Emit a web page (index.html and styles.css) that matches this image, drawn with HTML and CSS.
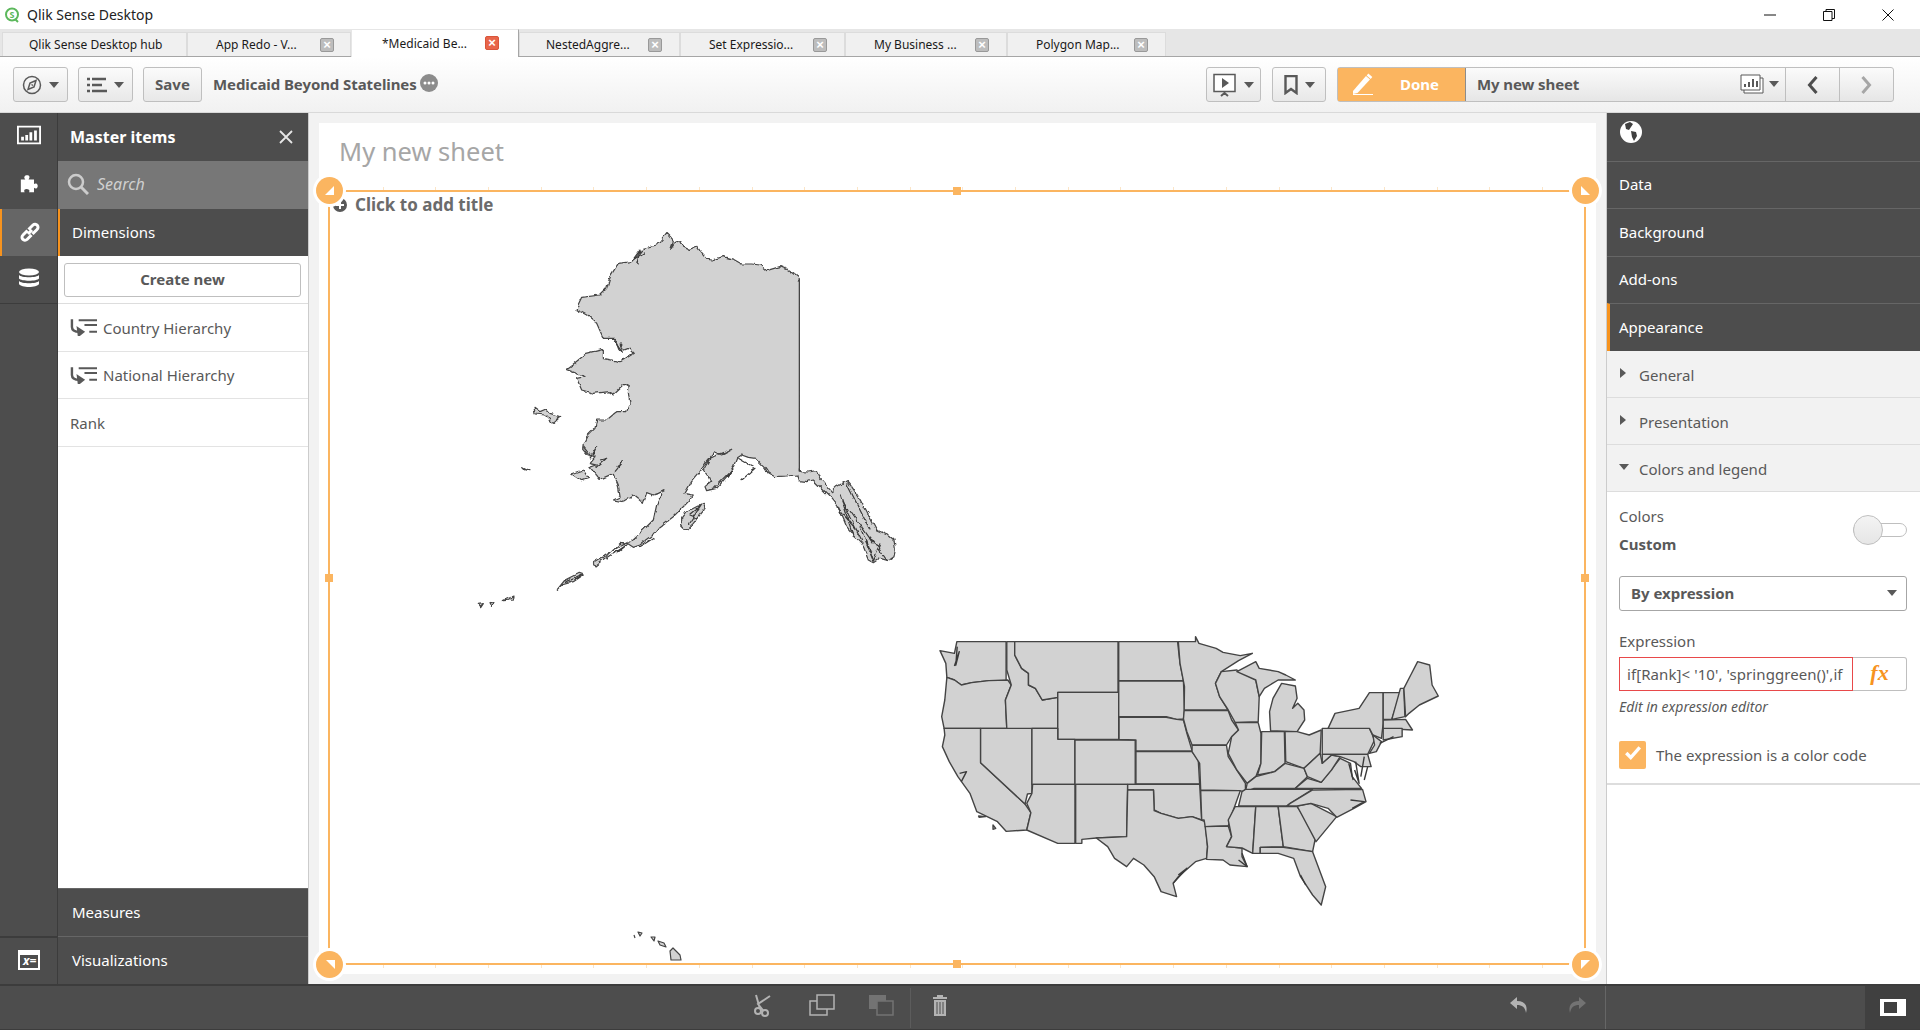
FILE: index.html
```html
<!DOCTYPE html>
<html lang="en">
<head>
<meta charset="utf-8">
<title>Qlik Sense Desktop</title>
<link rel="stylesheet" href="styles.css">
</head>
<body>
<div class="app">
  <header class="titlebar">
    <svg class="logo" viewBox="0 0 16 16"><circle cx="8" cy="7.500" r="6" fill="#fff" stroke="#5cb85c" stroke-width="2"/><path d="M11 12l3 3" stroke="#5cb85c" stroke-width="2"/><text x="8" y="10.500" text-anchor="middle" class="logo-s">S</text></svg>
    <span class="app-name">Qlik Sense Desktop</span>
    <div class="winctl">
      <svg viewBox="0 0 12 12"><path d="M0 6h12" stroke="#111" fill="none"/></svg>
      <svg viewBox="0 0 12 12"><path d="M.5 2.500h8.500v9h-8.500zM3 2.500V.5h8.500v9H9" stroke="#111" fill="none"/></svg>
      <svg viewBox="0 0 12 12"><path d="M.5.5l11 11M11.500.5l-11 11" stroke="#111" fill="none"/></svg>
    </div>
  </header>

  <nav class="tabs">
    <div class="tab w1"><span>Qlik Sense Desktop hub</span></div>
    <div class="tab w2"><span>App Redo - V...</span><i class="tabx">×</i></div>
    <div class="tab w3 active"><span>*Medicaid Be...</span><i class="tabx">×</i></div>
    <div class="tab w4"><span>NestedAggre...</span><i class="tabx">×</i></div>
    <div class="tab w5"><span>Set Expressio...</span><i class="tabx">×</i></div>
    <div class="tab w6"><span>My Business ...</span><i class="tabx">×</i></div>
    <div class="tab w7"><span>Polygon Map...</span><i class="tabx">×</i></div>
  </nav>

  <section class="toolbar">
    <button class="btn b55"><svg class="ico20" viewBox="0 0 20 20"><circle cx="10" cy="10" r="8.500" fill="none" stroke="#595959" stroke-width="1.500"/><path d="M14 5.500l-6 2.500-2 6.500 6-2.500zM9.500 9.500l1.500 1" fill="none" stroke="#595959" stroke-width="1.500"/></svg><b class="caret"></b></button>
    <button class="btn b55"><svg class="ico20" viewBox="0 0 20 16"><path d="M0 2h3M5 2h14M0 8h3M5 8h10M0 14h3M5 14h15" stroke="#595959" stroke-width="2.500" fill="none"/></svg><b class="caret"></b></button>
    <button class="btn save">Save</button>
    <span class="appname">Medicaid Beyond Statelines</span>
    <svg class="more" viewBox="0 0 18 18"><circle cx="9" cy="9" r="9" fill="#8c8c8c"/><circle cx="5" cy="9" r="1.500" fill="#fff"/><circle cx="9" cy="9" r="1.500" fill="#fff"/><circle cx="13" cy="9" r="1.500" fill="#fff"/></svg>

    <div class="tool-right">
      <button class="btn b55r"><svg class="ico24" viewBox="0 0 24 24"><path d="M1 1.500h21v17H1z" fill="#fff" stroke="#595959" stroke-width="1.500"/><path d="M9 5l7 5-7 5z" fill="#595959"/><path d="M11.500 18v3M8 23l3.500-3 3.500 3" stroke="#595959" stroke-width="2" fill="none"/></svg><b class="caret"></b></button>
      <button class="btn b54"><svg class="ico18" viewBox="0 0 14 20"><path d="M1.500 1h11v17l-5.500-4-5.500 4z" fill="none" stroke="#595959" stroke-width="2.400"/></svg><b class="caret"></b></button>
      <div class="sheetnav">
        <button class="done"><svg class="pencil" viewBox="0 0 22 22"><path d="M1 18L14 3l4 3.500L5.500 20 1 21z" fill="#fff"/><path d="M15.500 1.500l4 3.500" stroke="#fff" stroke-width="2.500"/><path d="M1 21.500h20" stroke="#fff"/></svg><span>Done</span></button>
        <div class="sheetname"><span>My new sheet</span><svg class="sheetico" viewBox="0 0 24 20"><path d="M4 4h19v15H4z" fill="#fff" stroke="#595959"/><path d="M1 1h19v15H1z" fill="#fff" stroke="#595959"/><path d="M5 13v-3M9 13V8M13 13V5M17 13V7" stroke="#595959" stroke-width="2"/></svg><b class="caret"></b></div>
        <button class="navbtn"><svg viewBox="0 0 12 20"><path d="M10 2L3 10l7 8" fill="none" stroke="#4d4d4d" stroke-width="3"/></svg></button>
        <button class="navbtn"><svg viewBox="0 0 12 20"><path d="M2 2l7 8-7 8" fill="none" stroke="#a6a6a6" stroke-width="3"/></svg></button>
      </div>
    </div>
  </section>

  <main class="main">
    <aside class="leftnav">
      <div class="navitem"><svg viewBox="0 0 26 20"><path d="M1 1h24v18H1z" fill="none" stroke="#fff" stroke-width="2"/><path d="M6 16v-4M10.500 16v-6M15 16V7M20 16V5" stroke="#fff" stroke-width="3"/></svg></div>
      <div class="navitem puzzle"><svg viewBox="0 0 22 22"><path d="M2 6h5c-1-1-1.500-2-1-3 .8-2 5-2 5.500 0 .2 1-.3 2-1 3h6v5c1-.6 2-.8 3-.3 1.500 1 1.500 4 0 5-1 .5-2 .2-3-.5v5H11c.5-1 .8-2 0-3-1.500-1-4-1-5 0-.5 1-.3 2 .3 3H2z" fill="#fff"/></svg></div>
      <div class="navitem on"><svg viewBox="0 0 20 20"><path d="M8 12l4-4M7.500 8.500l-4.500 4.500a3 3 0 0 0 4 4.500l4.500-4.500M8.500 7.500l4.500-4.500a3 3 0 0 1 4 4.500l-4.500 4.500" fill="none" stroke="#fff" stroke-width="3"/></svg></div>
      <div class="navitem last"><svg viewBox="0 0 22 20"><ellipse cx="11" cy="4" rx="10" ry="3.500" fill="#fff"/><path d="M1 7c2 3 18 3 20 0v3.500c-2 3-18 3-20 0zM1 13c2 3 18 3 20 0v3c-2 4-18 4-20 0z" fill="#fff"/></svg></div>
      <div class="navitem bottom"><svg viewBox="0 0 22 20"><path d="M0 0h22v20H0z" fill="#fff"/><path d="M2 5h18v13H2z" fill="#4d4d4d"/><text x="5" y="15" class="vis-x">x=</text></svg></div>
    </aside>

    <section class="leftpanel">
      <div class="lp-head"><span>Master items</span><svg viewBox="0 0 14 14"><path d="M1 1l12 12M13 1L1 13" stroke="#e6e6e6" stroke-width="1.800"/></svg></div>
      <div class="lp-search"><svg viewBox="0 0 22 22"><circle cx="9" cy="9" r="7" fill="none" stroke="#ccc" stroke-width="2.500"/><path d="M14 14l7 7" stroke="#ccc" stroke-width="3"/></svg><span>Search</span></div>
      <div class="lp-dim">Dimensions</div>
      <div class="lp-body">
        <div class="lp-create"><button class="createbtn">Create new</button></div>
        <div class="lp-row"><svg class="hier" viewBox="0 0 28 18"><path d="M2 1v8c0 3 3 5 8 5" fill="none" stroke="#595959" stroke-width="2.500"/><path d="M8 10l6 4-5 4zM9 2h19M15 7h13M20 14h8" fill="#595959" stroke="#595959" stroke-width="2"/></svg><span>Country Hierarchy</span></div>
        <div class="lp-row"><svg class="hier" viewBox="0 0 28 18"><path d="M2 1v8c0 3 3 5 8 5" fill="none" stroke="#595959" stroke-width="2.500"/><path d="M8 10l6 4-5 4zM9 2h19M15 7h13M20 14h8" fill="#595959" stroke="#595959" stroke-width="2"/></svg><span>National Hierarchy</span></div>
        <div class="lp-row plain"><span>Rank</span></div>
      </div>
      <div class="lp-foot">Measures</div>
      <div class="lp-foot">Visualizations</div>
    </section>

    <section class="canvas">
      <div class="sheet">
        <h1 class="sheet-title">My new sheet</h1>
        <div class="chart">
          <i class="ticks t-top"></i><i class="ticks t-bot"></i>
          <svg class="map" viewBox="328 190 1258 775" preserveAspectRatio="none">
            <defs>
              <filter id="rough" x="-5%" y="-5%" width="110%" height="110%"><feTurbulence type="fractalNoise" baseFrequency="0.05" numOctaves="2" seed="4" result="n"/><feDisplacementMap in="SourceGraphic" in2="n" scale="14" xChannelSelector="R" yChannelSelector="G"/></filter>
            </defs>
            <svg x="440" y="210" width="480" height="420" viewBox="0 0 1440 1260" preserveAspectRatio="none" class="geo">
              <g filter="url(#rough)">
              <path d="M678 70L688 80 700 95 692 118 705 98 718 92 728 110 745 118 770 108 785 130 800 148 815 150 850 140 880 148 905 162 935 162 960 165 980 182 1020 170 1045 180 1078 205 1078 785 1105 786 1130 782 1140 805 1175 845 1190 830 1220 812 1235 830 1265 875 1310 960 1345 975 1362 990 1366 1020 1362 1040 1345 1052 1320 1045 1300 1058 1285 1050 1265 1000 1250 985 1220 950 1195 890 1175 865 1150 840 1120 810 1100 815 1075 812 1070 795 1040 798 1005 800 985 790 975 775 945 745 925 742 905 735 890 745 880 770 860 800 830 835 800 842 795 830 812 815 805 800 790 780 810 745 825 738 875 718 845 735 825 725 800 755 780 785 755 815 735 850 760 855 745 875 735 885 700 920 660 950 640 975 620 990 600 1005 580 1012 565 1002 540 1000 515 1025 500 1040 465 1068 460 1058 490 1040 530 1015 570 995 610 960 640 930 650 885 672 842 655 850 640 855 620 848 610 880 580 855 548 875 520 870 540 860 535 825 520 790 480 808 450 772 470 765 448 760 465 740 445 735 428 715 430 700 440 680 465 655 470 630 500 630 530 605 560 605 570 580 565 545 568 530 555 522 520 555 505 545 460 550 425 540 410 505 435 500 378 478 400 462 440 430 490 418 490 445 540 455 580 430 565 415 540 425 525 385 490 385 470 340 440 315 408 298 425 262 480 255 500 235 510 200 535 160 575 155 610 115 650 105z"/>
              <path d="M282 592L285 612 315 615 340 640 362 620 330 610 318 597 300 605zM395 792L430 780 445 805 425 812zM725 925L740 905 790 880 795 895 760 940 740 960 725 945zM248 770L270 782 258 780zM352 1138L375 1110 415 1090 430 1095 400 1115 365 1125zM190 1172L222 1158 220 1170zM115 1180L130 1178 122 1190zM147 1178L162 1176 155 1192z"/>
              <path class="marks" d="M590 165L600 120 578 150 612 128M520 385L550 430 540 400M820 835L885 770 860 800M905 810L945 775 930 780M895 745L940 770M1200 850L1240 980 1215 900M1220 820L1290 960 1260 900M1190 890L1250 960M1260 950L1300 1050 1280 990M1290 980L1340 1050 1305 1000M1320 1000L1300 1055M1230 900L1300 1000M1205 870L1265 990M745 945L785 885 750 915 775 925M500 1045L560 1005 530 1030M600 1010L640 985M375 1118L425 1095 405 1110M450 745L470 710 460 735M470 770L500 745 480 750M525 785L550 755 530 770M430 710L450 735"/>
              </g>
              <rect class="patch-g" x="1050" y="215" width="28" height="560"/>
              <rect class="patch-w" x="1078" y="200" width="22" height="575"/>
              <path class="marks" d="M1078 205V785"/>
            </svg>
            <svg x="920" y="620" width="540" height="300" viewBox="0 0 1568 900" preserveAspectRatio="none" class="geo us">
              <path d="M107 65L250 65 250 181 200 182 150 188 120 195 100 180 78 172 75 130 58 92 100 100z"/>
              <path d="M78 172L100 180 120 195 150 188 200 182 255 180 265 195 248 240 252 325 70 325 63 290 72 240z"/>
              <path d="M70 325L176 325 176 428 305 552 322 578 310 630 250 634 225 605 165 575 145 520 110 470 85 425 65 380 72 345z"/>
              <path d="M176 325L325 325 325 520 312 522 305 552 176 428z"/>
              <path d="M252 65L275 65 275 105 295 145 315 160 315 195 335 205 355 240 400 232 400 325 252 325 248 240 265 195 252 150z"/>
              <path d="M275 65L575 65 575 217 400 217 400 232 355 240 335 205 315 195 315 160 295 145 275 105z"/>
              <path d="M400 217L577 217 577 358 400 358z"/>
              <path d="M325 325L400 325 400 358 450 358 450 493 325 493z"/>
              <path d="M327 493L450 493 450 670 400 670 310 630 322 578 310 550 325 520z"/>
              <path d="M450 360L625 360 625 493 450 493z"/>
              <path d="M452 493L603 493 600 650 512 654 470 658 470 670 452 670z"/>
              <path d="M577 65L748 65 755 130 765 182 577 182z"/>
              <path d="M577 183L765 183 768 270 765 297 745 298 715 290 577 290z"/>
              <path d="M578 292L715 292 745 298 765 300 775 340 790 392 627 393 627 360 578 358z"/>
              <path d="M627 395L790 395 808 420 812 492 627 492z"/>
              <path d="M603 493L812 493 818 600 790 590 750 595 700 580 680 570 678 510 603 510z"/>
              <path d="M603 510L678 510 680 572 700 580 750 595 790 590 828 605 835 680 832 715 800 725 750 770 735 790 745 830 700 815 680 770 650 735 620 715 600 740 565 715 545 680 512 654 600 650z"/>
              <path d="M750 65L800 65 800 50 810 70 860 85 880 97 930 107 965 100 925 122 875 155 858 190 870 230 895 270 767 270 768 200 755 130z"/>
              <path d="M767 272L895 272 905 300 925 330 905 350 890 375 790 375 775 335 765 297z"/>
              <path d="M790 376L890 376 895 410 920 450 945 490 945 515 925 512 815 510 812 430 790 395z"/>
              <path d="M815 512L930 512 910 570 895 618 828 620 825 600 818 600z"/>
              <path d="M828 620L895 618 905 650 890 680 935 684 935 710 950 740 900 735 880 720 832 718 835 680z"/>
              <path d="M875 155L920 150 975 180 985 230 982 305 915 307 895 270 870 230 858 190z"/>
              <path d="M915 308L982 308 990 340 990 430 975 470 950 490 920 450 895 400 905 350 925 330z"/>
              <path d="M1018 332L1015 275 1025 235 1050 190 1090 198 1095 235 1082 265 1097 250 1115 270 1117 300 1095 335z"/>
              <path d="M920 155L975 125 985 145 1040 155 1062 165 1090 180 1040 180 1000 205 985 230 975 180z"/>
              <path d="M992 335L1058 335 1060 430 1030 455 980 465 990 430z"/>
              <path d="M1060 335L1095 335 1130 345 1165 330 1162 400 1115 445 1062 425z"/>
              <path d="M975 470L1030 455 1060 430 1115 445 1125 470 1090 505 970 505 945 515 950 490z"/>
              <path d="M945 508L1140 508 1075 550 1065 558 925 558 935 515z"/>
              <path d="M915 560L975 560 966 700 935 684 890 680 905 650 895 600z"/>
              <path d="M975 560L1040 560 1055 680 988 682 988 700 966 700z"/>
              <path d="M1040 560L1095 560 1150 645 1140 695 1055 680z"/>
              <path d="M988 682L1055 682 1140 695 1178 800 1165 855 1140 825 1105 770 1085 715 1040 700 988 700z"/>
              <path d="M1095 558L1135 550 1210 590 1150 665z"/>
              <path d="M1065 558L1075 550 1140 510 1285 508 1295 545 1260 565 1210 592 1185 565 1135 550 1095 558z"/>
              <path d="M1090 505L1125 475 1165 487 1220 415 1250 430 1255 470 1282 505z"/>
              <path d="M1115 445L1162 400 1168 430 1195 405 1220 410 1195 450 1165 487 1125 470z"/>
              <path d="M1168 325L1305 325 1320 360 1300 403 1168 403z"/>
              <path d="M1185 325L1205 280 1275 265 1305 218 1345 218 1345 310 1340 355 1315 345 1305 325z"/>
              <path d="M1315 345L1340 365 1325 395 1305 400 1320 375z"/>
              <path d="M1168 403L1300 403 1310 440 1280 440 1260 425 1220 410 1195 405 1168 430z"/>
              <path d="M1345 218L1395 218 1370 298 1345 298z"/>
              <path d="M1395 205L1405 205 1408 290 1370 298z"/>
              <path d="M1405 205L1425 165 1445 125 1480 135 1487 195 1505 228 1450 255 1420 280 1410 290z"/>
              <path d="M1345 300L1410 298 1430 330 1345 325z"/>
              <path d="M1345 325L1400 325 1400 350 1345 360z"/>
              <path d="M170 588L190 590 172 592zM212 615L220 625 212 628z"/>
              <path class="marks" d="M108 80L104 135 114 95 100 138M1265 425L1275 490 1262 450M1290 410L1280 470M735 790L775 745 750 765M1105 765L1120 795M935 700L950 740 925 720M115 460L135 455 120 485M1250 540L1290 545 1255 565M1335 370L1375 350M1245 430L1258 480M1300 440L1290 480"/>
            </svg>
            <g class="geo">
              <path d="M670 951L673 948 680 955 681 960 671 960z"/>
              <path d="M658 941L664 943 666 947 660 945zM651 937L655 937 654 941zM638 932L642 933 640 936zM634 935L635 938"/>
            </g>
          </svg>
          <div class="add-title"><svg viewBox="0 0 14 14"><circle cx="7" cy="7" r="7" fill="#595959"/><path d="M7 3v8M3 7h8" stroke="#fff" stroke-width="2"/></svg><span>Click to add title</span></div>
          <i class="knob k-tl"></i><i class="knob k-tr"></i><i class="knob k-bl"></i><i class="knob k-br"></i>
          <i class="grip g-t"></i><i class="grip g-b"></i><i class="grip g-l"></i><i class="grip g-r"></i>
        </div>
      </div>
    </section>

    <aside class="rightpanel">
      <div class="rp-row head"><svg viewBox="0 0 22 22"><circle cx="11" cy="11" r="11" fill="#fff"/><path d="M5 3l5-2 3 2-2 3-2 3-3-1zM11 10l5 1 1 4-3 5-2-4z" fill="#404040"/></svg></div>
      <div class="rp-row">Data</div>
      <div class="rp-row">Background</div>
      <div class="rp-row">Add-ons</div>
      <div class="rp-row sel">Appearance</div>
      <div class="acc"><b class="tri right"></b>General</div>
      <div class="acc"><b class="tri right"></b>Presentation</div>
      <div class="acc"><b class="tri down"></b>Colors and legend</div>
      <div class="props">
        <div class="colorline">
          <div><div class="lbl">Colors</div><div class="lblb">Custom</div></div>
          <div class="toggle"><i></i></div>
        </div>
        <div class="select"><span>By expression</span><b class="caret"></b></div>
        <div class="lbl exprlbl">Expression</div>
        <div class="expr"><div class="exprinput">if[Rank]&lt; '10', 'springgreen()',if</div><div class="fx">fx</div></div>
        <div class="editlink">Edit in expression editor</div>
        <div class="checkline"><span class="check"><svg viewBox="0 0 16 14"><path d="M2 7l4 4 8-9" fill="none" stroke="#fff" stroke-width="3"/></svg></span><span>The expression is a color code</span></div>
      </div>
    </aside>
  </main>

  <footer class="bottombar">
    <div class="bb-left"></div>
    <div class="bb-center">
      <div class="bb-tools">
        <svg class="w22" viewBox="0 0 20 24"><circle cx="5" cy="18" r="3" fill="none" stroke="#b3b3b3" stroke-width="2"/><circle cx="12" cy="20" r="3" fill="none" stroke="#b3b3b3" stroke-width="2"/><path d="M7 16L3 2M10.500 18L5 11 17 3" fill="none" stroke="#b3b3b3" stroke-width="2"/></svg>
        <svg class="w26" viewBox="0 0 26 22"><path d="M1 7h17v14H1z" fill="#4d4d4d" stroke="#b3b3b3" stroke-width="1.500"/><path d="M8 1h17v14H8z" fill="#4d4d4d" stroke="#b3b3b3" stroke-width="1.500"/></svg>
        <svg class="w26" viewBox="0 0 26 22"><path d="M1 1h17v14H1z" fill="#737373"/><path d="M9 7h16v14H9z" fill="#4d4d4d" stroke="#737373" stroke-width="1.500"/></svg>
        <span class="bb-sep"></span>
        <svg class="w18" viewBox="0 0 16 22"><path d="M1 3h14v2H1zM5 1h6v2H5z" fill="#b3b3b3"/><path d="M2 6h12v16H2z" fill="#b3b3b3"/><path d="M5 8v12M8 8v12M11 8v12" stroke="#4d4d4d"/></svg>
      </div>
      <div class="bb-undo">
        <svg class="w20" viewBox="0 0 20 20"><path d="M8 2L1 8l7 6v-4c5 0 8 2 9 8 2-7-1-12-9-12z" fill="#b3b3b3"/></svg>
        <svg class="w20" viewBox="0 0 20 20"><path d="M12 2l7 6-7 6v-4c-5 0-8 2-9 8-2-7 1-12 9-12z" fill="#737373"/></svg>
      </div>
    </div>
    <div class="bb-right"><div class="viewbtn"><i></i></div></div>
  </footer>
</div>
</body>
</html>
```
FILE: styles.css
```css
* { box-sizing: border-box; }
html, body { margin: 0; height: 100%; overflow: hidden; }
body { font-family: "Noto Sans", "Open Sans", sans-serif; color: #595959; background: #fff; }
button { font-family: inherit; }
i, b { font-style: normal; }
.app { display: flex; flex-direction: column; height: 1030px; width: 1920px; }

/* title bar */
.titlebar { height: 29px; display: flex; align-items: center; padding-left: 4px; background: #fff; flex: none; }
.logo { width: 16px; height: 16px; }
.logo-s { font: bold 9px "Noto Sans", sans-serif; fill: #5cb85c; }
.app-name { margin-left: 7px; font-size: 14px; color: #222; }
.winctl { margin-left: auto; display: flex; gap: 47px; padding-right: 26px; }
.winctl svg { width: 12px; height: 12px; }

/* tabs */
.tabs { height: 28px; flex: none; display: flex; align-items: flex-end; padding-left: 2px; background: #e6e6e6; border-bottom: 1px solid #a6a6a6; }
.tab { height: 24px; display: flex; align-items: center; padding: 0 17px 0 28px; background: #f0f0f0; border: 1px solid #dcdcdc; border-bottom: 0; font-size: 12px; color: #1a1a1a; }
.tab.active { height: 28px; background: #fff; margin-bottom: -1px; padding: 0 19px 1px 30px; border-color: #e6e6e6; border-right-color: #a6a6a6; }
.w1 { width: 185px; padding-left: 26px; } .w2 { width: 164px; padding-right: 16px; } .w3 { width: 168px; } .w4 { width: 161px; padding-left: 26px; } .w5 { width: 165px; } .w6 { width: 162px; } .w7 { width: 159px; }
.tabx { margin-left: auto; width: 14px; height: 14px; background: #bdbdbd; border: 1px solid #999; border-radius: 2px; color: #fff; font: bold 13px/11px "Liberation Sans", sans-serif; text-align: center; }
.active .tabx { background: #e8654a; border-color: #d9553a; }

/* toolbar */
.toolbar { height: 56px; flex: none; display: flex; align-items: center; padding: 0 26px 0 13px; background: linear-gradient(#fff, #f1f1f1); border-bottom: 1px solid #d9d9d9; }
.btn { height: 35px; display: flex; align-items: center; justify-content: center; gap: 7px; padding: 0; border: 1px solid #bfbfbf; border-radius: 3px; background: linear-gradient(#fbfbfb, #e8e8e8); color: #595959; }
.b55 { width: 55px; margin-right: 10px; }
.b55r { width: 55px; margin-right: 11px; }
.b54 { width: 54px; margin-right: 11px; }
.save { width: 59px; font-size: 15px; font-weight: 700; padding-bottom: 2px; }
.caret { width: 0; height: 0; border: 5px solid transparent; border-top: 6px solid #595959; border-bottom: 0; display: inline-block; flex: none; }
.ico20 { width: 20px; height: 20px; }
.ico24 { width: 24px; height: 24px; }
.ico18 { width: 14px; height: 20px; }
.appname { margin: -2px 0 0 11px; font-size: 15px; font-weight: 700; letter-spacing: -0.08px; }
.more { width: 18px; height: 18px; margin: -3px 0 0 3px; }
.tool-right { margin-left: auto; display: flex; align-items: center; }
.sheetnav { display: flex; height: 35px; border: 1px solid #bfbfbf; border-radius: 3px; background: linear-gradient(#fbfbfb, #e6e6e6); }
.done { width: 128px; border: 0; border-right: 1px solid #8c8c8c; background: #fbb560; display: flex; align-items: center; padding: 0 0 2px 14px; color: #fff; font-size: 15px; font-weight: 700; }
.pencil { width: 22px; height: 22px; }
.done span { margin-left: 26px; }
.sheetname { width: 319px; display: flex; align-items: center; padding: 0 6px 2px 11px; font-size: 15px; font-weight: 700; letter-spacing: -0.1px; }
.sheetico { width: 24px; height: 20px; margin-left: auto; margin-right: 5px; }
.navbtn { width: 54px; border: 0; border-left: 1px solid #bfbfbf; background: transparent; padding: 0; display: flex; align-items: center; justify-content: center; }
.navbtn svg { width: 13px; height: 20px; }

/* main */
.main { flex: 1; display: flex; min-height: 0; }
.leftnav { width: 58px; flex: none; display: flex; flex-direction: column; background: #4d4d4d; border-right: 1px solid #3c3c3c; }
.navitem { height: 48px; display: flex; align-items: center; justify-content: center; flex: none; padding-bottom: 4px; }
.navitem svg { width: 24px; height: 20px; }
.navitem.puzzle { padding-bottom: 2px; }
.navitem.on { background: #666; border-left: 2px solid #f7931e; height: 47px; padding-bottom: 2px; }
.navitem.last { border-bottom: 1px solid #3c3c3c; }
.navitem.bottom { margin-top: auto; border-top: 2px solid #3c3c3c; padding-bottom: 2px; }
.vis-x { font: italic bold 12px "Noto Sans", sans-serif; fill: #fff; }

.leftpanel { width: 251px; flex: none; display: flex; flex-direction: column; background: #fff; border-right: 1px solid #ccc; }
.lp-head { height: 48px; flex: none; background: #4d4d4d; display: flex; align-items: center; justify-content: space-between; padding: 0 15px 0 12px; color: #fff; font-size: 16px; font-weight: 700; }
.lp-head svg { width: 14px; height: 14px; }
.lp-search { height: 48px; flex: none; background: #777; display: flex; align-items: center; padding: 0 0 2px 9px; color: #d0d0d0; font-size: 16px; font-style: italic; }
.lp-search svg { width: 22px; height: 22px; }
.lp-search span { margin-left: 8px; }
.lp-dim { height: 47px; flex: none; background: #4d4d4d; color: #fff; border-left: 2px solid #f7931e; display: flex; align-items: center; padding: 0 0 2px 12px; font-size: 15px; }
.lp-body { flex: 1; }
.lp-create { height: 48px; padding: 7px 7px 6px 6px; border-bottom: 1px solid #ddd; }
.createbtn { width: 100%; height: 34px; background: #fff; border: 1px solid #bfbfbf; border-radius: 3px; color: #595959; font-size: 15px; font-weight: 700; padding-bottom: 4px; }
.lp-row { height: 47.500px; border-bottom: 1px solid #e3e3e3; display: flex; align-items: center; padding-left: 12px; font-size: 15px; }
.lp-row span { padding-top: 1px; }
.hier { width: 27px; height: 18px; margin-right: 6px; }
.lp-foot { height: 48px; flex: none; background: #4d4d4d; color: #fff; border-top: 1px solid #666; display: flex; align-items: center; padding: 0 0 2px 14px; font-size: 15px; }
.lp-foot:first-of-type { border-top: 2px solid #b3b3b3; }

/* canvas */
.canvas { flex: 1; background: #f2f2f2; padding: 10px; display: flex; min-width: 0; }
.sheet { flex: 1; background: #fff; display: flex; flex-direction: column; padding: 0 10px 9px 9px; }
.sheet-title { height: 67px; flex: none; margin: 0; padding: 10px 0 0 11px; font-size: 25.500px; font-weight: 400; color: #a6a6a6; line-height: 36px; }
.chart { flex: 1; position: relative; border: 2px solid #fbb560; }
.map { position: absolute; left: -2px; top: -2px; width: 1258px; height: 775px; overflow: visible; }
.geo path { fill: #d2d2d2; stroke: #444; stroke-width: 1.200px; stroke-linejoin: round; vector-effect: non-scaling-stroke; }
.geo.us path { stroke-width: 1.400px; }
.geo path.marks { fill: none; stroke: #3a3a3a; }
.patch-g { fill: #d2d2d2; }
.patch-w { fill: #fff; }
.add-title { position: absolute; left: 3px; top: 1px; display: flex; align-items: center; gap: 8px; color: #6b6b6b; font-size: 17px; font-weight: 700; }
.add-title svg { width: 14px; height: 14px; }
.ticks { position: absolute; left: 0; right: 0; height: 3px; background: repeating-linear-gradient(to right, #fbe5c8 0 1px, transparent 1px 52.700px); }
.t-top { top: -5px; }
.t-bot { bottom: -5px; }
.knob { position: absolute; width: 27px; height: 27px; border-radius: 50%; background: #fbb560; box-shadow: 0 0 0 3px #fff; }
.knob::after { content: ""; position: absolute; left: 9px; top: 9px; width: 0; height: 0; border-left: 9px solid transparent; border-bottom: 9px solid #fff; }
.k-tl { left: -14px; top: -15px; }
.k-tr { right: -15px; top: -15px; }
.k-tr::after { border-left: 0; border-right: 9px solid transparent; left: 9px; }
.k-bl { left: -14px; bottom: -15px; }
.k-bl::after { border-bottom: 0; border-top: 9px solid #fff; border-left: 0; border-right: 9px solid transparent; left: 10px; transform: scaleX(-1); }
.k-br { right: -15px; bottom: -15px; }
.k-br::after { border-bottom: 0; border-left: 0; border-top: 9px solid #fff; border-right: 9px solid transparent; left: 9px; }
.grip { position: absolute; width: 8px; height: 8px; background: #fbb560; }
.g-t { left: calc(50% - 4px); top: -5px; }
.g-b { left: calc(50% - 4px); bottom: -5px; }
.g-l { top: calc(50% - 4px); left: -5px; }
.g-r { top: calc(50% - 4px); right: -5px; }

/* right panel */
.rightpanel { width: 314px; flex: none; display: flex; flex-direction: column; background: #fff; border-left: 1px solid #ccc; }
.rp-row { height: 47.500px; flex: none; background: #4d4d4d; color: #fff; border-top: 1px solid #666; display: flex; align-items: center; padding: 0 0 1px 12px; font-size: 15px; }
.rp-row.head { border-top: 0; padding-left: 13px; padding-bottom: 10px; }
.rp-row.head svg { width: 22px; height: 22px; }
.rp-row.sel { border-left: 3px solid #f7931e; padding-left: 9px; }
.acc { height: 47px; flex: none; background: #f2f2f2; border-bottom: 1px solid #ddd; display: flex; align-items: center; padding: 2px 0 0 13px; font-size: 15px; }
.tri { width: 0; height: 0; display: inline-block; margin-right: 15px; margin-top: -3px; flex: none; }
.tri.right { border-left: 6px solid #595959; border-top: 5px solid transparent; border-bottom: 5px solid transparent; margin-right: 13px; }
.tri.down { border-top: 6px solid #595959; border-left: 5px solid transparent; border-right: 5px solid transparent; margin-left: -1px; margin-right: 10px; }
.props { padding: 8px 13px 0 12px; height: 293px; border-bottom: 2px solid #ddd; }
.colorline { display: flex; justify-content: space-between; align-items: center; height: 66px; padding-top: 0; padding-bottom: 6px; }
.lbl { font-size: 15px; line-height: 28px; }
.lblb { font-size: 15px; font-weight: 700; line-height: 28px; }
.toggle { position: relative; width: 54px; height: 14px; margin-top: 0; border: 1px solid #bfbfbf; border-radius: 7px; }
.toggle i { position: absolute; left: -1px; top: -9px; width: 30px; height: 30px; border-radius: 50%; background: linear-gradient(#f4f4f4, #e6e6e6); border: 1px solid #bfbfbf; }
.select { height: 35px; margin-top: 10px; border: 1px solid #a6a6a6; border-radius: 3px; display: flex; align-items: center; justify-content: space-between; padding: 0 9px 0 11px; font-size: 15px; font-weight: 700; }
.exprlbl { margin-top: 16px; }
.expr { display: flex; height: 34px; margin-top: 2px; }
.exprinput { width: 234px; border: 1px solid #e8494a; padding: 0 0 0 7px; font-size: 15px; line-height: 33px; letter-spacing: 0.08px; white-space: nowrap; overflow: hidden; }
.fx { flex: 1; border: 1px solid #bfbfbf; border-left: 0; border-radius: 0 3px 3px 0; text-align: center; font: italic bold 22px/30px "Liberation Serif", serif; color: #f7931e; }
.editlink { font-size: 14px; font-style: italic; margin-top: 6px; line-height: 20px; }
.checkline { display: flex; align-items: center; gap: 10px; margin-top: 24px; font-size: 15px; }
.check { width: 27px; height: 28px; border-radius: 2px; background: #fbb560; display: flex; align-items: center; justify-content: center; flex: none; }
.check svg { width: 18px; height: 16px; margin-top: -4px; }

/* bottom bar */
.bottombar { height: 46px; flex: none; display: flex; background: #4d4d4d; border-top: 2px solid #3c3c3c; border-bottom: 1px solid #3c3c3c; }
.bb-left { width: 309px; flex: none; }
.bb-center { flex: 1; display: flex; align-items: center; border-right: 1px solid #666; padding: 0 18px 5px 444px; }
.bb-tools { display: flex; align-items: center; gap: 33px; }
.bb-tools .w22 { margin-right: 3px; }
.bb-sep { width: 1px; height: 40px; background: #5c5c5c; margin: 5px -12px 0 -17px; }
.bb-undo { margin-left: auto; display: flex; gap: 38px; }
.w22 { width: 20px; height: 24px; }
.w26 { width: 26px; height: 22px; }
.w18 { width: 16px; height: 22px; }
.w20 { width: 20px; height: 20px; }
.bb-right { width: 314px; flex: none; display: flex; justify-content: flex-end; }
.viewbtn { width: 55px; height: 100%; background: #404040; display: flex; align-items: center; justify-content: center; }
.viewbtn i { width: 26px; height: 17px; background: #fff; display: block; position: relative; }
.viewbtn i::after { content: ""; position: absolute; left: 4px; top: 3px; width: 13px; height: 11px; background: #404040; }
```
